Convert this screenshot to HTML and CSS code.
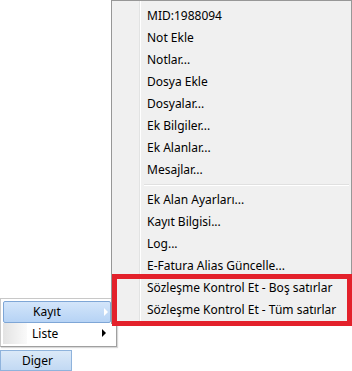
FILE: index.html
```html
<!DOCTYPE html>
<html>
<head>
<meta charset="utf-8">
<link rel="stylesheet" href="styles.css">
</head>
<body>
<div class="screen">
  <div class="menu main-menu">
    <div class="item">MID:1988094</div>
    <div class="item">Not Ekle</div>
    <div class="item">Notlar...</div>
    <div class="item">Dosya Ekle</div>
    <div class="item">Dosyalar...</div>
    <div class="item">Ek Bilgiler...</div>
    <div class="item">Ek Alanlar...</div>
    <div class="item">Mesajlar...</div>
    <div class="sep"></div>
    <div class="item">Ek Alan Ayarları...</div>
    <div class="item">Kayıt Bilgisi...</div>
    <div class="item">Log...</div>
    <div class="item">E-Fatura Alias Güncelle...</div>
    <div class="item">Sözleşme Kontrol Et - Boş satırlar</div>
    <div class="item">Sözleşme Kontrol Et - Tüm satırlar</div>
  </div>
  <div class="highlight-box"></div>
  <div class="menu small-menu">
    <div class="sitem active"><span class="stext">Kayıt</span><span class="arrow light"></span></div>
    <div class="sitem"><span class="gutter"></span><span class="stext">Liste</span><span class="arrow"></span></div>
  </div>
  <div class="bottom">
    <div class="btn">Di<u>g</u>er</div>
  </div>
</div>
</body>
</html>
```
FILE: styles.css
```css
html, body {
  margin: 0;
  padding: 0;
  background: #fff;
}
.screen {
  position: relative;
  width: 352px;
  height: 371px;
  overflow: hidden;
  font-family: "Noto Sans", "Open Sans", sans-serif;
  font-size: 12px;
  color: #000;
}
.main-menu {
  position: absolute;
  left: 111px;
  top: 0;
  width: 241px;
  box-sizing: border-box;
  border: 1px solid #979797;
  padding: 4px 2px 2px 2px;
  background: #f0f0f0 linear-gradient(to right, transparent 27px, #e2e3e3 27px, #e2e3e3 28px, #fff 28px, #fff 29px, transparent 29px);
  z-index: 2;
}
.item {
  height: 22px;
  line-height: 22px;
  padding-left: 33px;
  white-space: nowrap;
}
.sep {
  height: 8px;
  margin-left: 30px;
  background: linear-gradient(#f0f0f0 3px, #e0e0e0 3px, #e0e0e0 4px, #fff 4px, #fff 5px, #f0f0f0 5px);
}
.highlight-box {
  position: absolute;
  left: 112px;
  top: 274px;
  width: 240px;
  height: 52px;
  box-sizing: border-box;
  border: 5px solid #e3212b;
  z-index: 3;
}
.small-menu {
  position: absolute;
  left: 0;
  top: 298px;
  width: 117px;
  height: 49px;
  box-sizing: border-box;
  border: 1px solid #c8c8c8;
  border-right-color: #a0a0a0;
  border-bottom-color: #a0a0a0;
  background: #fff;
  padding: 2px;
  box-shadow: 1px 1px 1px rgba(0,0,0,0.15);
  z-index: 1;
  display: flex;
  flex-direction: column;
}
.sitem {
  position: relative;
  height: 22px;
  display: flex;
  align-items: center;
  box-sizing: border-box;
}
.sitem.active {
  margin-right: 3px;
  border: 1px solid #7ea6d6;
  border-radius: 2px;
  background: linear-gradient(#d3e5fa, #b6d3f5);
}
.gutter {
  width: 24px;
  align-self: stretch;
  background: linear-gradient(to right, #e3e3e3, #fafafa);
}
.stext {
  padding-left: 29px;
  flex: 1;
}
.gutter + .stext {
  padding-left: 5px;
}
.arrow {
  width: 0;
  height: 0;
  border-top: 4px solid transparent;
  border-bottom: 4px solid transparent;
  border-left: 4px solid #000;
  margin-right: 8px;
}
.arrow.light {
  border-left-color: #fff;
  margin-right: 2px;
}
.bottom {
  position: absolute;
  left: 0;
  top: 350px;
}
.btn {
  width: 72px;
  height: 21px;
  box-sizing: border-box;
  border: 1px solid #8fb3dc;
  background: linear-gradient(#dbe9f8, #c2d9f3);
  line-height: 19px;
  padding-left: 21px;
  font-size: 12px;
}
```
